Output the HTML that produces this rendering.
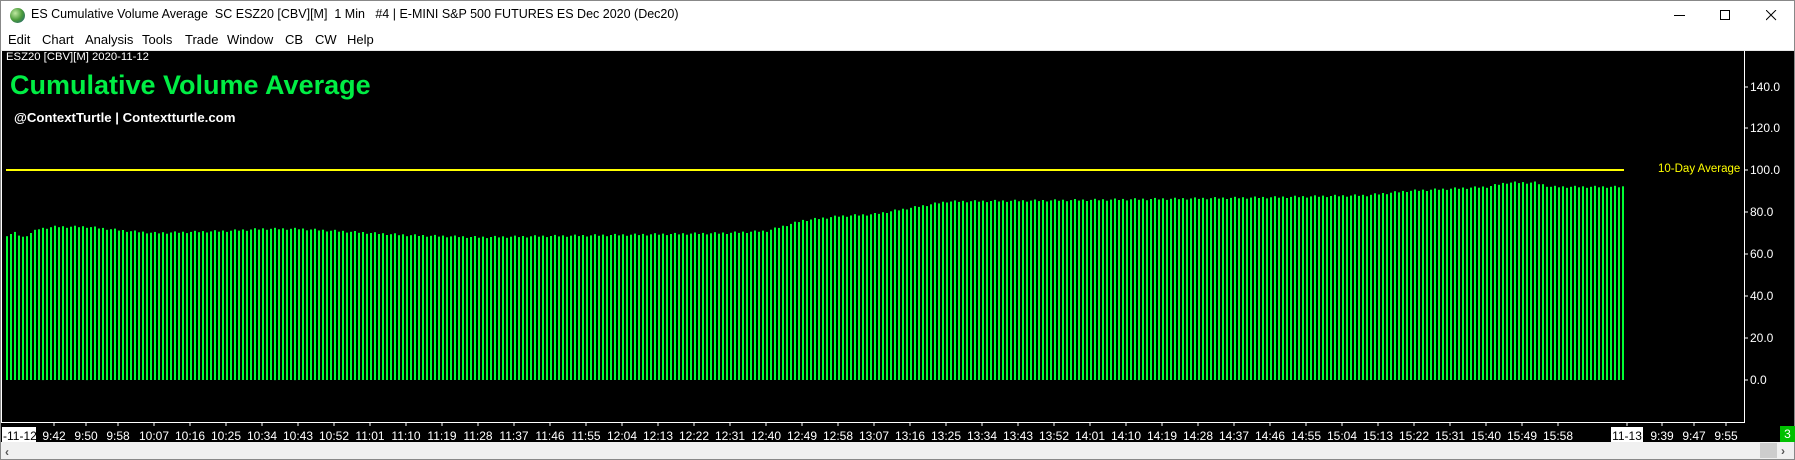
<!DOCTYPE html>
<html><head><meta charset="utf-8"><style>
*{margin:0;padding:0;box-sizing:border-box}
body{width:1795px;height:460px;overflow:hidden;background:#fff;font-family:"Liberation Sans",sans-serif;position:relative}
.t{position:absolute;white-space:nowrap}
.m{position:absolute;white-space:nowrap;top:32px;font-size:13px}
</style></head><body>
<div style="position:absolute;left:0;top:0;width:1795px;height:460px;border:1px solid #888"></div>
<div style="position:absolute;left:10px;top:8px;width:15px;height:15px;border-radius:50%;background:radial-gradient(circle at 35% 35%,#bfe8a0,#4a9a3a 50%,#1c5a80)"></div>
<div class="t" style="left:31px;top:7px;font-size:12.5px;color:#000">ES Cumulative Volume Average&nbsp; SC ESZ20 [CBV][M]&nbsp; 1 Min&nbsp;&nbsp; #4 | E-MINI S&amp;P 500 FUTURES ES Dec 2020 (Dec20)</div>
<div style="position:absolute;left:1674px;top:15px;width:11px;height:1px;background:#000"></div>
<div style="position:absolute;left:1720px;top:10px;width:10px;height:10px;border:1px solid #000"></div>
<svg style="position:absolute;left:1766px;top:10px" width="11" height="11"><path d="M0 0L10 10M10 0L0 10" stroke="#000" stroke-width="1"/></svg>
<div class="m" style="left:8px">Edit</div>
<div class="m" style="left:42px">Chart</div>
<div class="m" style="left:85px">Analysis</div>
<div class="m" style="left:142px">Tools</div>
<div class="m" style="left:185px">Trade</div>
<div class="m" style="left:227px">Window</div>
<div class="m" style="left:285px">CB</div>
<div class="m" style="left:315px">CW</div>
<div class="m" style="left:347px">Help</div>
<div style="position:absolute;left:1px;top:50px;width:1793px;height:2px;background:#e8e8e8"></div>
<div style="position:absolute;left:1px;top:51px;width:1793px;height:391px;background:#000"></div>
<div style="position:absolute;left:1px;top:442px;width:1793px;height:17px;background:#f0f0f0"></div>
<div class="t" style="left:5px;top:445px;font-size:12px;color:#555;font-weight:bold">&lsaquo;</div>
<div style="position:absolute;left:1760px;top:443px;width:17px;height:15px;background:#cdcdcd"></div>
<div class="t" style="left:1781px;top:444px;font-size:12px;color:#555;font-weight:bold">&rsaquo;</div>
<svg style="position:absolute;left:0;top:0" width="1795" height="460" id="s">
<line x1="1744.5" y1="51" x2="1744.5" y2="423" stroke="#fff"/>
<line x1="1" y1="422.5" x2="1745" y2="422.5" stroke="#fff"/>
<line x1="1.5" y1="51" x2="1.5" y2="423" stroke="#fff"/>
<line x1="6" y1="170" x2="1624" y2="170" stroke="#ffff00" stroke-width="2"/>
<g id="bars" fill="#00ff33"></g>
<g id="ax" fill="#fff" font-family="Liberation Sans" font-size="12"></g>
</svg>
<div class="t" style="left:6px;top:51px;font-size:11.3px;color:#fff">ESZ20 [CBV][M] 2020-11-12</div>
<div class="t" style="left:10px;top:70px;font-size:27px;font-weight:bold;color:#00ee44">Cumulative Volume Average</div>
<div class="t" style="left:14px;top:110px;font-size:13.2px;font-weight:bold;color:#fff">@ContextTurtle | Contextturtle.com</div>
<div class="t" style="left:1658px;top:163px;font-size:11.5px;color:#ffff00">10-Day Average</div>
<div class="t" style="left:1780px;top:426px;width:15px;height:16px;background:#00c000;color:#fff;font-size:12px;text-align:center;line-height:16px">3</div>
<script>
var pts=[[0,69],[2,70],[4,68],[8,72],[12,73],[20,73],[30,71],[37,70],[55,71],[64,72],[73,72],[82,71],[100,69],[118,68],[150,69],[180,70],[190,71],[199,76],[208,78],[217,79],[226,82],[235,85],[260,85.5],[280,86],[316,87],[340,88],[350,90],[370,92],[375,94],[382,94],[386,92],[410,92]];
function v(m){for(var i=0;i<pts.length-1;i++){if(m<=pts[i+1][0]){var a=pts[i],b=pts[i+1];return a[1]+(b[1]-a[1])*(m-a[0])/(b[0]-a[0]);}}return 92;}
var g=document.getElementById('bars'),h='';
for(var i=0;i<405;i++){var val=v(i)+((i*7)%5-2)*0.25;var y=380-val*2.1;h+='<rect x="'+(6+4*i)+'" y="'+y.toFixed(1)+'" width="2" height="'+(380-y).toFixed(1)+'"/>';}
g.innerHTML=h;
var ax=document.getElementById('ax'),s='';
var yl=[[140,87],[120,128],[100,170],[80,212],[60,254],[40,296],[20,338],[0,380]];
yl.forEach(function(p){s+='<line x1="1744" y1="'+p[1]+'" x2="1748" y2="'+p[1]+'" stroke="#fff"/><text x="1750" y="'+(p[1]+4)+'">'+p[0].toFixed(1)+'</text>';});
var labs=['9:42','9:50','9:58'];var xs=[54,86,118];
for(var m=10*60+7;m<=15*60+58;m+=9){labs.push(Math.floor(m/60)+':'+('0'+m%60).slice(-2));xs.push(6+4*(m-570));}
for(var k=0;k<labs.length;k++){s+='<line x1="'+xs[k]+'" y1="422" x2="'+xs[k]+'" y2="426" stroke="#fff"/><text x="'+xs[k]+'" y="440" text-anchor="middle">'+labs[k]+'</text>';}
[['9:39',1662],['9:47',1694],['9:55',1726]].forEach(function(p){s+='<line x1="'+p[1]+'" y1="422" x2="'+p[1]+'" y2="426" stroke="#fff"/><text x="'+p[1]+'" y="440" text-anchor="middle">'+p[0]+'</text>';});
s+='<rect x="2" y="427" width="34" height="15" fill="#fff"/><text x="3" y="440" fill="#000">-11-12</text>';
s+='<line x1="1627" y1="422" x2="1627" y2="426" stroke="#fff"/><rect x="1611" y="427" width="32" height="15" fill="#fff"/><text x="1627" y="440" fill="#000" text-anchor="middle">11-13</text>';
ax.innerHTML=s;
</script>
</body></html>
